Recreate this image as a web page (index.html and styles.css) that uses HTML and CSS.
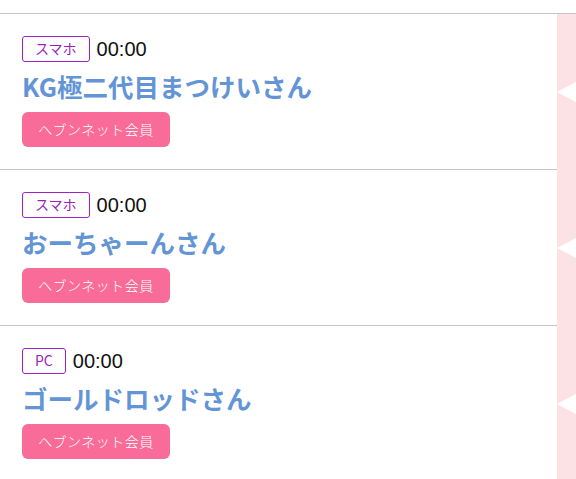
FILE: index.html
```html
<!DOCTYPE html>
<html lang="ja">
<head>
    <meta charset="UTF-8">
    <meta name="viewport" content="width=device-width, initial-scale=1.0">
    <title>待機一覧</title>
    <link rel="stylesheet" href="styles.css">
</head>
<body>

    <div class="list">
        <!-- 1件目 -->
        <div class="row">
            <div class="entry">
                <div class="meta">
                    <span class="device">スマホ</span>
                    <span class="time">00:00</span>
                </div>
                <div class="name">KG極二代目まつけいさん</div>
                <span class="member">ヘブンネット会員</span>
            </div>
            <div class="side"></div>
        </div>

        <!-- 2件目 -->
        <div class="row">
            <div class="entry">
                <div class="meta">
                    <span class="device">スマホ</span>
                    <span class="time">00:00</span>
                </div>
                <div class="name">おーちゃーんさん</div>
                <span class="member">ヘブンネット会員</span>
            </div>
            <div class="side"></div>
        </div>

        <!-- 3件目 -->
        <div class="row">
            <div class="entry">
                <div class="meta">
                    <span class="device">PC</span>
                    <span class="time">00:00</span>
                </div>
                <div class="name">ゴールドロッドさん</div>
                <span class="member">ヘブンネット会員</span>
            </div>
            <div class="side"></div>
        </div>
    </div>

</body>
</html>
```

FILE: styles.css
```css
body {
    font-family: "Noto Sans CJK JP", "Noto Sans", sans-serif;
    background-color: #ffffff;
    margin: 0;
    padding: 0;
    overflow: hidden;
}

.list {
    margin-top: 13px;
    border-top: 1px solid #c4c4c4;
}

.row {
    display: flex;
    height: 156px;
}

.entry {
    flex: 1;
    padding: 22px 22px 0;
    border-bottom: 1px solid #c4c4c4;
}

/* 右端のピンクの帯 */
.side {
    width: 19px;
    background-color: #fde2e5;
    position: relative;
}

.side::before {
    content: "";
    position: absolute;
    right: 0;
    top: 50%;
    margin-top: -10px;
    border-right: 19px solid #ffffff;
    border-top: 10px solid transparent;
    border-bottom: 10px solid transparent;
}

.meta {
    display: flex;
    align-items: center;
    gap: 7px;
    height: 26px;
}

.device {
    display: inline-block;
    box-sizing: border-box;
    height: 26px;
    line-height: 23px;
    padding: 0 12px;
    font-size: 14px;
    color: #9a1fbf;
    border: 1.5px solid #a020c8;
    border-radius: 3px;
}

.time {
    font-family: "Liberation Sans", Arial, sans-serif;
    font-size: 20px;
    color: #111;
    line-height: 26px;
}

.name {
    margin-top: 8px;
    font-size: 25.5px;
    font-weight: bold;
    color: #6395d6;
    line-height: 32px;
}

.member {
    display: inline-block;
    margin-top: 10px;
    width: 148px;
    height: 35px;
    line-height: 35px;
    text-align: center;
    font-size: 14px;
    font-weight: 300;
    letter-spacing: 0.5px;
    color: #ffffff;
    background-color: #f96c9a;
    border-radius: 6px;
}
```
